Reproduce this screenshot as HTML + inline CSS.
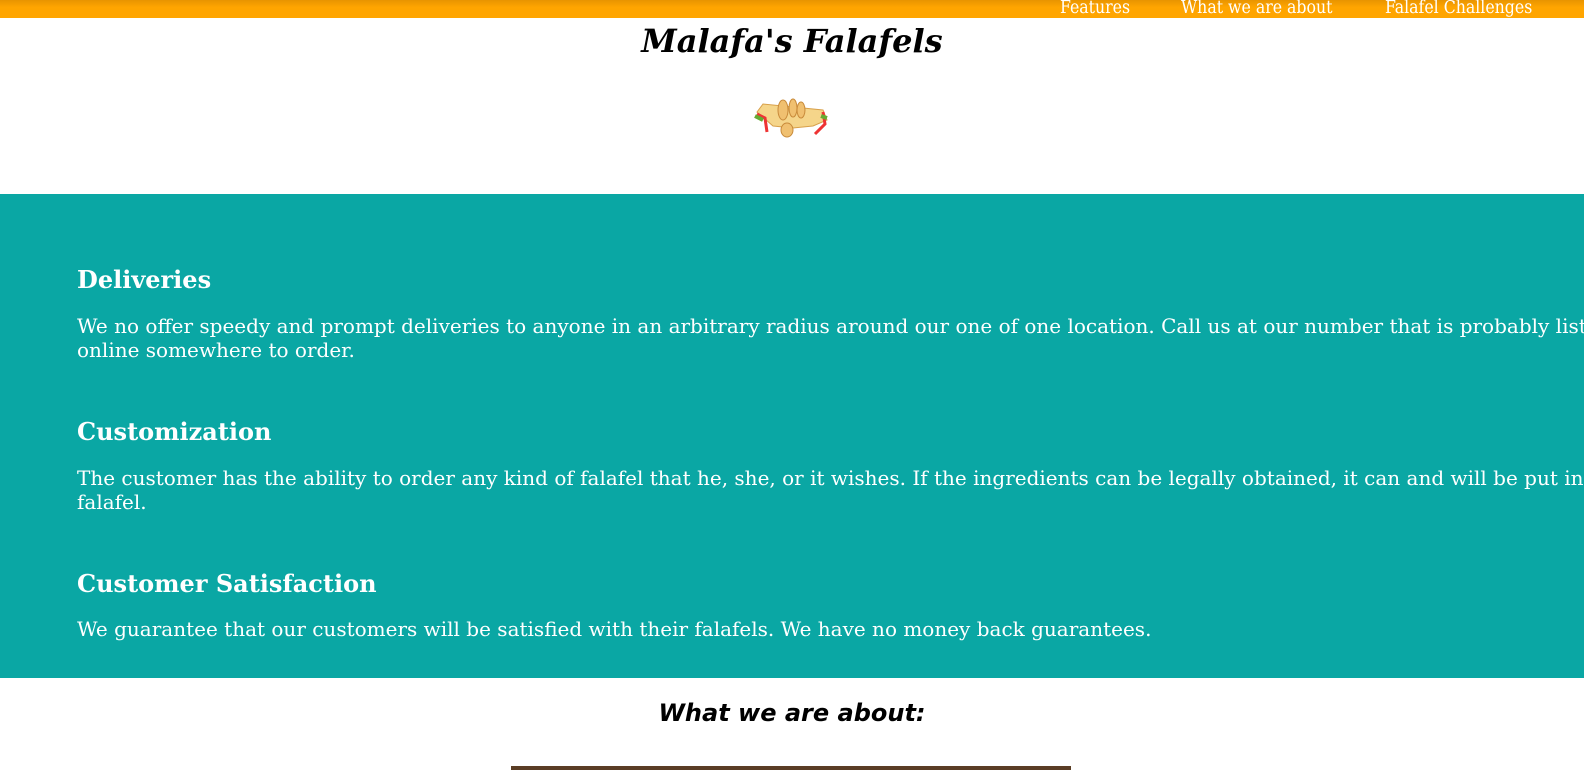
<!DOCTYPE html>
<html><head><style>
body{margin:0;width:1584px;height:770px;overflow:hidden;background:#fff;font-family:"DejaVu Serif",serif;}
.nav{height:18px;background:linear-gradient(#e89400,#ffa500 40%,#ffa500);position:relative}
.nav span{position:absolute;top:-1px;color:#fff;font-family:"DejaVu Serif Condensed","DejaVu Serif",serif;font-size:17.5px;line-height:18px;white-space:nowrap}
h1{margin:0;position:absolute;top:20px;left:0;width:1584px;text-align:center;font-size:32px;font-style:italic;font-weight:bold;line-height:42px}
.img{position:absolute;left:753px;top:82px;width:76px;height:76px}
.sec{position:absolute;top:194px;left:0;width:1584px;height:484px;background:#0aa7a4;color:#fff;overflow:hidden}
.sec h2{position:absolute;left:77px;margin:0;font-size:24px;font-weight:bold;white-space:nowrap}
.sec p{position:absolute;left:77px;margin:0;font-size:20px;line-height:24px;width:1540px}
h3{position:absolute;top:699px;left:0;width:1584px;text-align:center;margin:0;font-family:"DejaVu Sans",sans-serif;font-style:italic;font-weight:bold;font-size:24px}
.bar{position:absolute;left:511px;top:766px;width:560px;height:4px;background:#5a3d25}
</style></head><body>
<div class="nav"><span style="left:1060px">Features</span><span style="left:1181px">What we are about</span><span style="left:1385px">Falafel Challenges</span></div>
<h1>Malafa's Falafels</h1>
<svg class="img" viewBox="0 0 76 76">
<path d="M4 30 L10 22 L70 28 L74 38 L60 44 L40 46 L20 44 Z" fill="#f5d58a" stroke="#d8a04a"/>
<ellipse cx="30" cy="28" rx="5" ry="10" fill="#f0c070" stroke="#c88a3a"/>
<ellipse cx="40" cy="26" rx="4" ry="9" fill="#f0c070" stroke="#c88a3a"/>
<ellipse cx="48" cy="28" rx="4" ry="8" fill="#f0c070" stroke="#c88a3a"/>
<ellipse cx="34" cy="48" rx="6" ry="7" fill="#f0c070" stroke="#c88a3a"/>
<path d="M4 32 L12 36 L14 50" stroke="#e33" stroke-width="3" fill="none"/>
<path d="M70 30 L72 42 L62 52" stroke="#e33" stroke-width="3" fill="none"/>
<path d="M2 34 L10 38" stroke="#6a3" stroke-width="4"/>
<path d="M68 34 L74 36" stroke="#6a3" stroke-width="4"/>
</svg>
<div class="sec">
<h2 style="top:71px">Deliveries</h2>
<p style="top:120px">We no offer speedy and prompt deliveries to anyone in an arbitrary radius around our one of one location. Call us at our number that is probably listed online somewhere to order.</p>
<h2 style="top:223px">Customization</h2>
<p style="top:272px">The customer has the ability to order any kind of falafel that he, she, or it wishes. If the ingredients can be legally obtained, it can and will be put in a falafel.</p>
<h2 style="top:375px">Customer Satisfaction</h2>
<p style="top:423px">We guarantee that our customers will be satisfied with their falafels. We have no money back guarantees.</p>
</div>
<h3>What we are about:</h3>
<div class="bar"></div>
</body></html>
